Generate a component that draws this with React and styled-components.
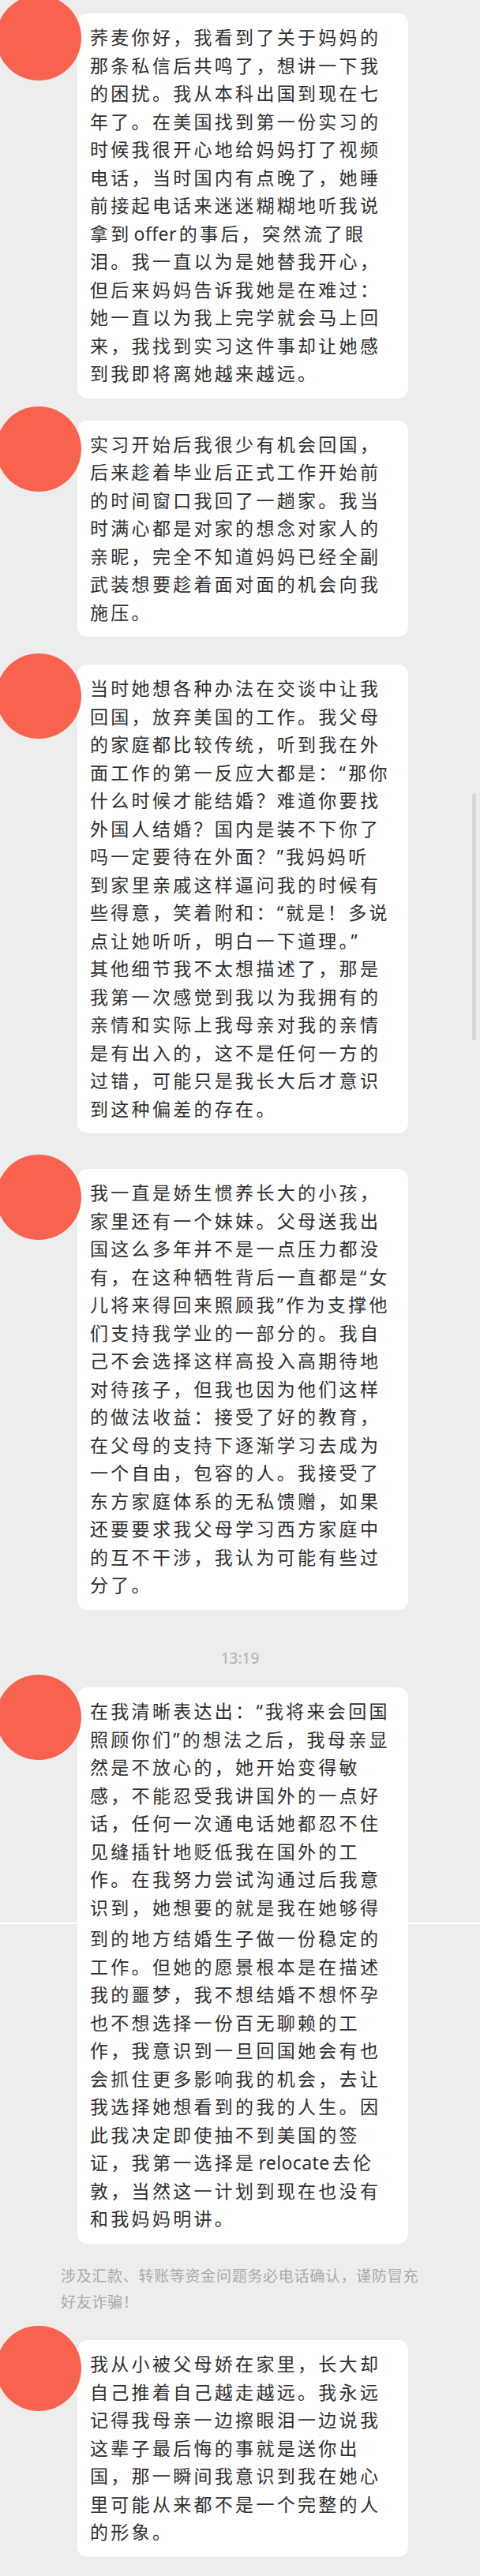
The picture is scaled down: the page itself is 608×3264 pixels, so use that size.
import React from 'react'
import styled, { createGlobalStyle } from 'styled-components'

const Global = createGlobalStyle`
  * {
    margin: 0;
    box-sizing: border-box;
  }

  body {
    background: #ededed;
    font-family: "Noto Sans", "Noto Sans CJK SC", sans-serif;
  }
`

const Page = styled.div`
  position: relative;
  width: 608px;
  padding-bottom: 24.5px;
  display: flex;
  flex-direction: column;
`

const Row = styled.div`
  display: flex;
  align-items: flex-start;
  margin-top: ${({ gap }) => gap}px;
`

const Avatar = styled.div`
  position: relative;
  z-index: 1;
  flex: 0 0 108px;
  height: 108px;
  margin-left: -5px;
  border-radius: 50%;
  background: #f86350;
`

const Bubble = styled.div`
  width: 419px;
  margin-left: -5px;
  margin-top: ${({ offset }) => offset}px;
  padding: 13px 16px;
  border-radius: 13px;
  background: #fff;
  color: #2f2f2f;
  font-size: 23px;
  letter-spacing: 3.3px;
  line-height: 35.5px;
`

const Line = styled.span`
  display: block;
  white-space: nowrap;
`

const Latin = styled.span`
  letter-spacing: 0.4px;
  padding: 0 3px;
`

const Seam = styled.div`
  width: 608px;
  height: 4px;
  margin-left: -114px;
  background: linear-gradient(to bottom, transparent 1px, #fff 1px, #fff 3px, transparent 3px);
`

const Time = styled.div`
  margin-top: 49.5px;
  text-align: center;
  color: #b0b0b0;
  font-size: 19px;
  line-height: 24px;
`

const Notice = styled.p`
  margin-top: 25px;
  padding: 0 60px 0 77px;
  color: #a9a9a9;
  font-size: 19px;
  letter-spacing: 0.7px;
  line-height: 33px;
`

const Scrollbar = styled.div`
  position: absolute;
  left: 598px;
  top: 1005px;
  width: 5px;
  height: 313px;
  border-radius: 3px;
  background: #d8d8d8;
`

const rich = (text) =>
  text.split(/([A-Za-z]+)/).map((part, i) =>
    /^[A-Za-z]+$/.test(part) ? <Latin key={i}>{part}</Latin> : part
  )

const Message = ({ gap, offset, lines }) => (
  <Row gap={gap}>
    <Avatar />
    <Bubble offset={offset}>
      {lines.map((l, i) =>
        l === '---' ? <Seam key={i} /> : <Line key={i}>{rich(l)}</Line>
      )}
    </Bubble>
  </Row>
)

const first = [
  '荞麦你好，我看到了关于妈妈的',
  '那条私信后共鸣了，想讲一下我',
  '的困扰。我从本科出国到现在七',
  '年了。在美国找到第一份实习的',
  '时候我很开心地给妈妈打了视频',
  '电话，当时国内有点晚了，她睡',
  '前接起电话来迷迷糊糊地听我说',
  '拿到offer的事后，突然流了眼',
  '泪。我一直以为是她替我开心，',
  '但后来妈妈告诉我她是在难过：',
  '她一直以为我上完学就会马上回',
  '来，我找到实习这件事却让她感',
  '到我即将离她越来越远。',
]

const second = [
  '实习开始后我很少有机会回国，',
  '后来趁着毕业后正式工作开始前',
  '的时间窗口我回了一趟家。我当',
  '时满心都是对家的想念对家人的',
  '亲昵，完全不知道妈妈已经全副',
  '武装想要趁着面对面的机会向我',
  '施压。',
]

const third = [
  '当时她想各种办法在交谈中让我',
  '回国，放弃美国的工作。我父母',
  '的家庭都比较传统，听到我在外',
  '面工作的第一反应大都是：“那你',
  '什么时候才能结婚？难道你要找',
  '外国人结婚？国内是装不下你了',
  '吗一定要待在外面？”我妈妈听',
  '到家里亲戚这样逼问我的时候有',
  '些得意，笑着附和：“就是！多说',
  '点让她听听，明白一下道理。”',
  '其他细节我不太想描述了，那是',
  '我第一次感觉到我以为我拥有的',
  '亲情和实际上我母亲对我的亲情',
  '是有出入的，这不是任何一方的',
  '过错，可能只是我长大后才意识',
  '到这种偏差的存在。',
]

const fourth = [
  '我一直是娇生惯养长大的小孩，',
  '家里还有一个妹妹。父母送我出',
  '国这么多年并不是一点压力都没',
  '有，在这种牺牲背后一直都是“女',
  '儿将来得回来照顾我”作为支撑他',
  '们支持我学业的一部分的。我自',
  '己不会选择这样高投入高期待地',
  '对待孩子，但我也因为他们这样',
  '的做法收益：接受了好的教育，',
  '在父母的支持下逐渐学习去成为',
  '一个自由，包容的人。我接受了',
  '东方家庭体系的无私馈赠，如果',
  '还要要求我父母学习西方家庭中',
  '的互不干涉，我认为可能有些过',
  '分了。',
]

const fifth = [
  '在我清晰表达出：“我将来会回国',
  '照顾你们”的想法之后，我母亲显',
  '然是不放心的，她开始变得敏',
  '感，不能忍受我讲国外的一点好',
  '话，任何一次通电话她都忍不住',
  '见缝插针地贬低我在国外的工',
  '作。在我努力尝试沟通过后我意',
  '识到，她想要的就是我在她够得',
  '---',
  '到的地方结婚生子做一份稳定的',
  '工作。但她的愿景根本是在描述',
  '我的噩梦，我不想结婚不想怀孕',
  '也不想选择一份百无聊赖的工',
  '作，我意识到一旦回国她会有也',
  '会抓住更多影响我的机会，去让',
  '我选择她想看到的我的人生。因',
  '此我决定即使抽不到美国的签',
  '证，我第一选择是relocate去伦',
  '敦，当然这一计划到现在也没有',
  '和我妈妈明讲。',
]

const sixth = [
  '我从小被父母娇在家里，长大却',
  '自己推着自己越走越远。我永远',
  '记得我母亲一边擦眼泪一边说我',
  '这辈子最后悔的事就是送你出',
  '国，那一瞬间我意识到我在她心',
  '里可能从来都不是一个完整的人',
  '的形象。',
]

export default function App() {
  return (
    <>
      <Global />
      <Page>
        <Message gap={-6} offset={23} lines={first} />
        <Message gap={10.5} offset={17.5} lines={second} />
        <Message gap={21} offset={14} lines={third} />
        <Message gap={27} offset={18} lines={fourth} />
        <Time>13:19</Time>
        <Message gap={9} offset={16} lines={fifth} />
        <Notice>
          涉及汇款、转账等资金问题务必电话确认，谨防冒充
          <br />
          好友诈骗！
        </Notice>
        <Message gap={13.5} offset={18} lines={sixth} />
        <Scrollbar />
      </Page>
    </>
  )
}
